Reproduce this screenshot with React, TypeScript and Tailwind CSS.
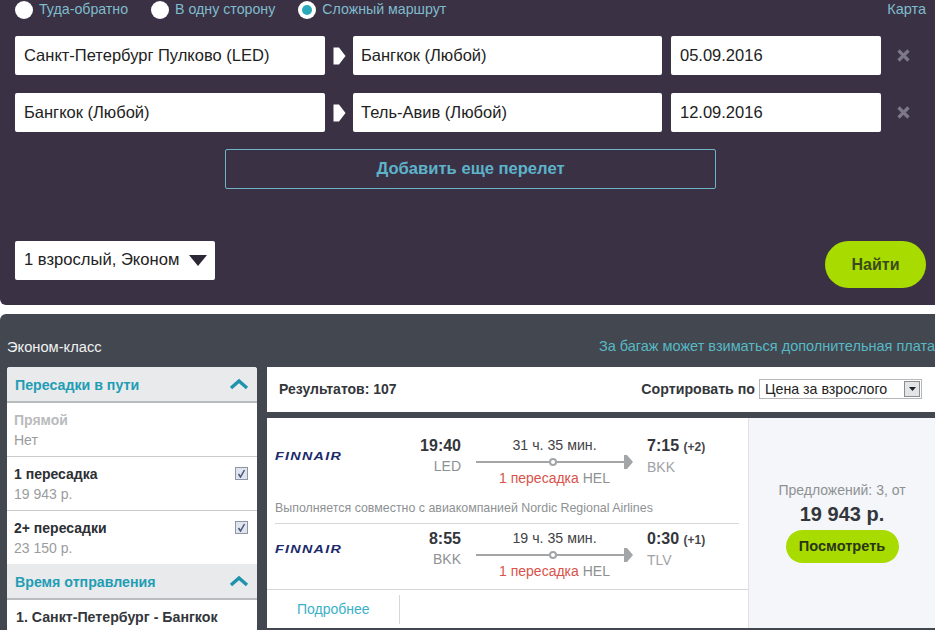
import React from "react";

const Radio: React.FC<{ label: string; active?: boolean }> = ({ label, active }) => (
  <div className="flex items-center gap-[6px]">
    <span className="w-[18px] h-[18px] rounded-full bg-white flex items-center justify-center">
      {active && <span className="w-[10px] h-[10px] rounded-full bg-[#2aa9ba]" />}
    </span>
    <span className="text-[14.2px] text-[#7fbccb]">{label}</span>
  </div>
);

const Field: React.FC<{ text: string; className: string }> = ({ text, className }) => (
  <div className={`h-[39px] bg-white rounded-[2px] flex items-center text-[16.5px] text-[#222] ${className}`}>
    {text}
  </div>
);

const RouteRow: React.FC<{ from: string; to: string; date: string }> = ({ from, to, date }) => (
  <div className="flex items-center">
    <Field text={from} className="w-[310px] pl-[9px]" />
    <div className="w-[28px] flex justify-center">
      <svg width="13" height="18" viewBox="0 0 13 18">
        <path d="M0.5 0.5 L6 0.5 L12.5 9 L6 17.5 L0.5 17.5 Z" fill="#fff" />
      </svg>
    </div>
    <Field text={to} className="w-[309px] pl-[8px]" />
    <Field text={date} className="w-[210px] ml-[9px] pl-[9px]" />
    <svg className="ml-[16px]" width="13" height="13" viewBox="0 0 13 13">
      <path d="M1.5 1.5 L11.5 11.5 M11.5 1.5 L1.5 11.5" stroke="#7d7887" strokeWidth="3.2" />
    </svg>
  </div>
);

const Chevron = () => (
  <svg width="20" height="12" viewBox="0 0 20 12">
    <path d="M2 10 L10 3 L18 10" fill="none" stroke="#1f93ab" strokeWidth="3.4" />
  </svg>
);

const Checkbox = () => (
  <span className="w-[13px] h-[13px] border border-[#8f96a3] bg-[#dfe4ef] flex items-center justify-center">
    <svg width="9" height="9" viewBox="0 0 9 9">
      <path d="M1.5 5 L3.5 8 L7.5 1" fill="none" stroke="#4a5578" strokeWidth="1.5" />
    </svg>
  </span>
);

const StopFilter: React.FC<{ title: string; price: string; disabled?: boolean; last?: boolean }> = ({
  title,
  price,
  disabled,
  last,
}) => (
  <div className={`pl-[7px] pr-[9px] pt-[7px] flex justify-between bg-white ${last ? "h-[53px]" : "h-[54px] border-b border-[#c9cbcd]"}`}>
    <div className="flex flex-col">
      <span className={`text-[14px] leading-[20px] font-bold ${disabled ? "text-[#b9bbbd]" : "text-[#2c2f33]"}`}>{title}</span>
      <span className="text-[14px] leading-[20px] text-[#9a9c9e]">{price}</span>
    </div>
    {!disabled && (
      <div className="pt-[3px]">
        <Checkbox />
      </div>
    )}
  </div>
);

const SectionHead: React.FC<{ title: string; className?: string }> = ({ title, className }) => (
  <div className={`bg-[#e8eaec] flex items-center justify-between pl-[8px] pr-[8px] border-b-2 border-[#b9bcbf] ${className ?? ""}`}>
    <span className="text-[14.2px] leading-[20px] pt-[2px] font-bold text-[#1f9db5]">{title}</span>
    <Chevron />
  </div>
);

const FinnairLogo = () => (
  <span className="block text-[11px] leading-[10px] font-bold italic tracking-[1px] text-[#1c2a6b] scale-x-[1.3] origin-left whitespace-nowrap">
    FINNAIR
  </span>
);

const Segment: React.FC<{
  dep: string;
  depCode: string;
  duration: string;
  arr: string;
  plus: string;
  arrCode: string;
  className: string;
}> = ({ dep, depCode, duration, arr, plus, arrCode, className }) => (
  <div className={`flex pl-[8px] ${className}`}>
    <div className="w-[186px] flex">
      <div className="w-[66px] pt-[15px]">
        <FinnairLogo />
      </div>
      <div className="flex-1 text-right">
        <div className="text-[16px] leading-[20px] font-bold text-[#33363a]">{dep}</div>
        <div className="text-[14px] leading-[20px] text-[#8e9193]">{depCode}</div>
      </div>
    </div>
    <div className="w-[157px] ml-[15px]">
      <div className="text-[14.2px] leading-[18px] text-center text-[#3f4246]">{duration}</div>
      <div className="relative h-[2px] bg-[#a3a5a7] mt-[7px] mr-[3px]">
        <span className="absolute left-[73px] top-[-3px] w-[8px] h-[8px] rounded-full bg-white border-2 border-[#a3a5a7]" />
        <svg className="absolute right-[-3px] top-[-6px]" width="9" height="14" viewBox="0 0 9 14">
          <path d="M0 0 L3 0 L9 7 L3 14 L0 14 Z" fill="#a3a5a7" />
        </svg>
      </div>
      <div className="text-[14px] leading-[18px] mt-[6px] text-center">
        <span className="text-[#d9534a]">1 пересадка</span> <span className="text-[#8e9193]">HEL</span>
      </div>
    </div>
    <div className="ml-[14px]">
      <div className="text-[16px] leading-[20px] font-bold text-[#33363a] whitespace-nowrap">
        {arr} <span className="text-[12px] text-[#44474b]">{plus}</span>
      </div>
      <div className="text-[14px] leading-[20px] text-[#a0a3a5]">{arrCode}</div>
    </div>
  </div>
);

export default function App() {
  return (
    <div className="w-[935px] h-[630px] overflow-hidden bg-white font-['Liberation_Sans',sans-serif]">
      <div className="h-[305px] bg-[#3a3145] rounded-bl-[6px] pl-[15px] flex flex-col">
        <div className="h-[20px] mb-[16px] flex items-center justify-between pr-[9px]">
          <div className="flex items-center gap-[23px]">
            <Radio label="Туда-обратно" />
            <Radio label="В одну сторону" />
            <Radio label="Сложный маршрут" active />
          </div>
          <span className="text-[14.5px] text-[#7fbccb]">Карта</span>
        </div>
        <div className="flex flex-col gap-[18px]">
          <RouteRow from="Санкт-Петербург Пулково (LED)" to="Бангкок (Любой)" date="05.09.2016" />
          <RouteRow from="Бангкок (Любой)" to="Тель-Авив (Любой)" date="12.09.2016" />
        </div>
        <div className="ml-[210px] mt-[17px] w-[491px] h-[40px] border border-[#6fb4c6] rounded-[2px] flex items-center justify-center text-[16.6px] font-bold text-[#5db3ca]">
          Добавить еще перелет
        </div>
        <div className="mt-[52px] flex items-start justify-between pr-[9px]">
          <div className="w-[200px] h-[39px] bg-white rounded-[2px] flex items-center justify-between pl-[9px] pr-[8px] text-[16.6px] text-[#222]">
            1 взрослый, Эконом
            <svg width="18" height="11" viewBox="0 0 18 11">
              <path d="M0 0 H18 L9 11 Z" fill="#2d2836" />
            </svg>
          </div>
          <div className="w-[101px] h-[47px] rounded-full bg-[#a8dc00] flex items-center justify-center text-[16px] font-bold text-[#3a4a1a]">
            Найти
          </div>
        </div>
      </div>

      <div className="mt-[9px] h-[316px] bg-[#43474f] rounded-tl-[6px] overflow-hidden">
        <div className="h-[53px] flex items-center justify-between pl-[7px] pt-[13px] whitespace-nowrap">
          <span className="text-[14.7px] text-[#f0f1f2]">Эконом-класс</span>
          <span className="text-[14.5px] text-[#57b9c6]">За багаж может взиматься дополнительная плата</span>
        </div>
        <div className="flex items-start">
          <div className="ml-[7px] w-[250px] h-[263px] bg-white rounded-t-[3px] overflow-hidden">
            <SectionHead title="Пересадки в пути" className="h-[36px]" />
            <StopFilter title="Прямой" price="Нет" disabled />
            <StopFilter title="1 пересадка" price="19 943 р." />
            <StopFilter title="2+ пересадки" price="23 150 р." last />
            <SectionHead title="Время отправления" className="h-[36px]" />
            <div className="pl-[9px] pt-[7px] text-[14.2px] leading-[20px] font-bold text-[#33363a]">
              1. Санкт-Петербург - Бангкок
            </div>
          </div>
          <div className="ml-[10px] flex-1 flex flex-col gap-[6px]">
            <div className="h-[45px] bg-white flex items-center justify-between pl-[12px] pr-[13px]">
              <span className="text-[14px] font-bold text-[#33363a]">Результатов: 107</span>
              <div className="flex items-center gap-[4px]">
                <span className="text-[14.2px] font-bold text-[#33363a]">Сортировать по</span>
                <div className="w-[163px] h-[20px] border border-[#b5b7b9] bg-white flex items-center justify-between pl-[5px] pr-[1px] text-[14.2px] text-[#222]">
                  Цена за взрослого
                  <span className="w-[16px] h-[16px] border border-[#8a8c90] bg-[#e3e4e6] flex items-center justify-center">
                    <svg width="7" height="4" viewBox="0 0 7 4">
                      <path d="M0 0 H7 L3.5 4 Z" fill="#222" />
                    </svg>
                  </span>
                </div>
              </div>
            </div>
            <div className="h-[210px] bg-white flex">
              <div className="w-[481px] flex flex-col">
                <Segment
                  className="h-[82px] pt-[18px]"
                  dep="19:40"
                  depCode="LED"
                  duration="31 ч. 35 мин."
                  arr="7:15"
                  plus="(+2)"
                  arrCode="BKK"
                />
                <div className="h-[24px] ml-[8px] mr-[9px] border-b border-[#d5d6d8] text-[12.4px] leading-[16px] text-[#8e9193] whitespace-nowrap">
                  Выполняется совместно с авиакомпанией Nordic Regional Airlines
                </div>
                <Segment
                  className="h-[65px] pt-[5px]"
                  dep="8:55"
                  depCode="BKK"
                  duration="19 ч. 35 мин."
                  arr="0:30"
                  plus="(+1)"
                  arrCode="TLV"
                />
                <div className="flex-1 border-t border-[#d5d6d8] flex items-center">
                  <div className="w-[133px] h-[29px] border-r border-[#d5d6d8] flex items-center pl-[30px] text-[14px] text-[#3ab0c8]">
                    Подробнее
                  </div>
                </div>
              </div>
              <div className="flex-1 bg-[#f4f6f9] border-l border-[#dfe1e4] flex flex-col items-center pt-[63px]">
                <span className="text-[14px] leading-[18px] text-[#8e9193]">Предложений: 3, от</span>
                <span className="text-[20px] leading-[24px] mt-[3px] font-bold text-[#33363a]">19 943 р.</span>
                <span className="mt-[4px] w-[113px] h-[33px] rounded-full bg-[#a8dc00] flex items-center justify-center text-[14.6px] font-bold text-[#2a3518]">
                  Посмотреть
                </span>
              </div>
            </div>
          </div>
        </div>
      </div>
    </div>
  );
}
